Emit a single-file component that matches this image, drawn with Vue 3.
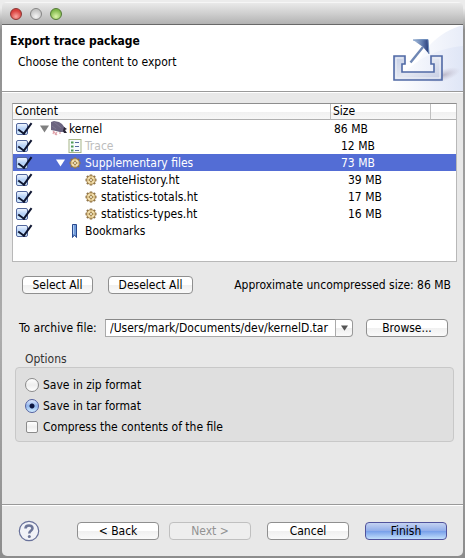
<script setup>
import { ref } from 'vue'

const rows = ref([
  { id: 'kernel', label: 'kernel', size: '86 MB', level: 0, icon: 'kernel', open: true, checked: true },
  { id: 'trace', label: 'Trace', size: '12 MB', level: 1, icon: 'trace', muted: true, checked: true },
  { id: 'supp', label: 'Supplementary files', size: '73 MB', level: 1, icon: 'gear', open: true, selected: true, checked: true },
  { id: 'history', label: 'stateHistory.ht', size: '39 MB', level: 2, icon: 'gear', checked: true },
  { id: 'totals', label: 'statistics-totals.ht', size: '17 MB', level: 2, icon: 'gear', checked: true },
  { id: 'types', label: 'statistics-types.ht', size: '16 MB', level: 2, icon: 'gear', checked: true },
  { id: 'bookmarks', label: 'Bookmarks', size: '', level: 1, icon: 'bookmark', checked: true }
])
const archive = ref('/Users/mark/Documents/dev/kernelD.tar')
const format = ref('tar')
const compress = ref(false)
const setAll = (value) => rows.value.forEach((row) => { row.checked = value })
</script>

<template>
  <div class="desktop">
    <main class="window">
      <div class="titlebar">
        <button class="light red" aria-label="Close"></button>
        <button class="light grey" aria-label="Minimize"></button>
        <button class="light green" aria-label="Zoom"></button>
      </div>

      <header class="banner">
        <div class="heading">
          <h1>Export trace package</h1>
          <p>Choose the content to export</p>
        </div>
        <svg class="art" viewBox="0 0 75 66" aria-hidden="true">
          <defs>
            <linearGradient id="wash" x1="0" y1="0" x2="1" y2="0">
              <stop offset="0" stop-color="#fff" />
              <stop offset="1" stop-color="#dce3f5" />
            </linearGradient>
            <linearGradient id="tray" x1="0" y1="0" x2="1" y2="1">
              <stop offset="0" stop-color="#c3cde5" />
              <stop offset=".5" stop-color="#e3e7f1" />
              <stop offset="1" stop-color="#c2cae2" />
            </linearGradient>
            <linearGradient id="head" x1="0" y1="0" x2="1" y2="0">
              <stop offset="0" stop-color="#b5cbe5" />
              <stop offset=".6" stop-color="#5c77ab" />
              <stop offset="1" stop-color="#263a78" />
            </linearGradient>
            <radialGradient id="shade">
              <stop offset="0" stop-color="#b7b3c4" stop-opacity=".9" />
              <stop offset="1" stop-color="#c8c5d5" stop-opacity="0" />
            </radialGradient>
          </defs>
          <path d="M75 0C50 7 30 25 18 66H75Z" fill="url(#wash)" opacity=".65" />
          <path d="M75 21C50 23 22 34 2 66H75Z" fill="url(#wash)" opacity=".75" />
          <ellipse cx="56" cy="50" rx="17" ry="6" fill="url(#shade)" transform="rotate(-18 56 50)" />
          <path d="M6 31H17V39H14V47H46V39H43V31H54V55H6Z" fill="url(#tray)" stroke="#5069a5" stroke-width="1.6" />
          <path d="M8 33H15M8 33V53H52V33H45" fill="none" stroke="#eef1f8" />
          <path d="M22.500 37.500L35 22" stroke="#6f87b4" stroke-width="2.400" />
          <path d="M25 15L40 14L41 29L35 22Z" fill="url(#head)" />
          <path d="M25 15L40 14.500L41 29" fill="none" stroke="#6f8fbd" />
        </svg>
      </header>

      <section class="body">
        <div class="tree">
          <table>
            <colgroup><col><col class="size-col"><col class="end-col"></colgroup>
            <thead>
              <tr><th>Content</th><th>Size</th><th class="last"></th></tr>
            </thead>
            <tbody>
              <tr v-for="row in rows" :key="row.id" :class="{ selected: row.selected, muted: row.muted }">
                <td>
                  <div class="node">
                    <input :id="row.id" v-model="row.checked" class="tick" type="checkbox">
                    <span class="twist" :class="'level' + row.level">
                      <svg v-if="row.open" viewBox="0 0 10 8" aria-hidden="true"><path d="M0 0H10L5 8Z" fill="currentColor" /></svg>
                    </span>
                    <svg v-if="row.icon === 'kernel'" class="icon" viewBox="0 0 16 16" aria-hidden="true">
                      <path d="M3 10L2 13M6 11L4 14M9 11V13M2 10L6 14" stroke="#e0a3ab" stroke-width="1.200" />
                      <path d="M0 1L3 0L8 1L11 3L14 7L13 11L9 11L5 10L0 9Z" fill="#6b6480" />
                      <path d="M3 1L10 7M1 5L5 8" stroke="#7d758f" />
                      <path d="M13 6L16 8L14 9L16 12L13 12L12 10Z" fill="#282334" />
                    </svg>
                    <svg v-else-if="row.icon === 'trace'" class="icon" viewBox="0 0 16 16" aria-hidden="true">
                      <rect x="2" y="1.500" width="12" height="13" fill="#f8fcff" stroke="#a8b587" />
                      <path d="M8 4.500H12M8 8.500H12M8 12.500H12" stroke="#586ca0" />
                      <path d="M4 4.500H6.500M4 8.500H6.500M4 12.500H6.500" stroke="#4f9b56" stroke-width="2.200" />
                    </svg>
                    <svg v-else-if="row.icon === 'gear'" class="icon" viewBox="0 0 16 16" aria-hidden="true">
                      <path d="M8 2.500V13.500M2.500 8H13.500M4 4L12 12M12 4L4 12" stroke="#8d7348" stroke-width="2.400" />
                      <circle cx="8" cy="8" r="4.300" fill="#f6e3b0" stroke="#a5854f" />
                      <path d="M8 4.500V11.500M4.500 8H11.500" stroke="#c3a468" />
                      <circle cx="8" cy="8" r="1.500" fill="#fffbe9" stroke="#9b7d47" />
                    </svg>
                    <svg v-else class="icon" viewBox="0 0 16 16" aria-hidden="true">
                      <path d="M5.500 1.500H9.500V14.500L7.500 12L5.500 14.500Z" fill="#729cda" stroke="#28498f" />
                      <path d="M6.500 2V11" stroke="#b2cef3" />
                    </svg>
                    <label :for="row.id">{{ row.label }}</label>
                  </div>
                </td>
                <td :class="'indent' + row.level">{{ row.size }}</td>
                <td></td>
              </tr>
            </tbody>
          </table>
        </div>

        <div class="selection">
          <button class="push" @click="setAll(true)">Select All</button>
          <button class="push wide" @click="setAll(false)">Deselect All</button>
          <output>Approximate uncompressed size: 86 MB</output>
        </div>

        <div class="archive">
          <label for="archive">To archive file:</label>
          <div class="combo">
            <input id="archive" v-model="archive" type="text">
            <button aria-label="Show recent archive files">
              <svg viewBox="0 0 8 6" aria-hidden="true"><path d="M0 0H8L4 6Z" fill="#555" /></svg>
            </button>
          </div>
          <button class="push browse">Browse...</button>
        </div>

        <fieldset class="options">
          <legend>Options</legend>
          <div class="group">
            <label><input v-model="format" type="radio" name="format" value="zip">Save in zip format</label>
            <label><input v-model="format" type="radio" name="format" value="tar">Save in tar format</label>
            <label><input v-model="compress" class="box" type="checkbox">Compress the contents of the file</label>
          </div>
        </fieldset>
      </section>

      <footer class="footer">
        <button class="help" aria-label="Help">
          <svg viewBox="0 0 22 22" aria-hidden="true">
            <circle cx="11" cy="11" r="9.700" fill="#f1f2f7" stroke="#69729b" stroke-width="1.200" />
            <path d="M7.500 8.500C7.500 4.500 14.500 4.500 14.500 8.300C14.500 11 11.300 10.600 11.300 13.500" fill="none" stroke="#6c7598" stroke-width="2.600" />
            <circle cx="11.300" cy="16.500" r="1.500" fill="#6c7598" />
          </svg>
        </button>
        <div class="steps">
          <button class="push">&lt; Back</button>
          <button class="push" disabled>Next &gt;</button>
        </div>
        <div class="actions">
          <button class="push">Cancel</button>
          <button class="push primary">Finish</button>
        </div>
      </footer>
    </main>
  </div>
</template>

<style>
body { background: #a3a3a3; }
</style>

<style scoped>
.desktop {
  min-height: 100vh;
  box-sizing: border-box;
  padding: 2px;
  display: flex;
  background: linear-gradient(#ececec 0 8px, #8f8f8f 30px, #adadad 60%, #8c8c8c);
  font: 12px/16px "DejaVu Sans Condensed", "Noto Sans", sans-serif;
  color: #000;
}
.desktop * { box-sizing: border-box; }
button, input { font: inherit; color: inherit; margin: 0; }
.window {
  flex: 1;
  min-width: 0;
  display: flex;
  flex-direction: column;
  background: #e8e8e8;
  border-radius: 5px;
  overflow: hidden;
}
.titlebar {
  height: 23px;
  display: flex;
  align-items: center;
  gap: 8px;
  padding: 0 8px;
  background: linear-gradient(#e9e9e9, #d2d2d2 45%, #b2b2b2);
  border-top: 1px solid #f6f6f6;
  border-bottom: 1px solid #686868;
}
.light {
  width: 12px;
  height: 12px;
  padding: 0;
  border: 1px solid #777;
  border-radius: 50%;
}
.red { background: radial-gradient(circle at 50% 75%, #f9a6a0, #d9403c 65%); border-color: #8b3532; }
.grey { background: radial-gradient(circle at 50% 75%, #f4f4f4, #c5c5c5 70%); border-color: #858585; }
.green { background: radial-gradient(circle at 50% 75%, #dcf5a9, #80b84b 70%); border-color: #527934; }

.banner {
  height: 67px;
  display: flex;
  justify-content: space-between;
  background: #fff;
  border-bottom: 1px solid #999;
}
.heading { padding: 8px; }
h1 { margin: 0; font-size: 12px; line-height: 16px; font-weight: 700; }
p { margin: 5px 8px; }
.art { width: 75px; height: 66px; flex: none; }

.body {
  flex: 1;
  padding: 10px 6px 0 10px;
  border-top: 1px solid #fff;
}
.tree {
  height: 159px;
  background: #fff;
  border: 1px solid #b8b8b8;
  border-top-color: #8e8e8e;
}
table { width: 100%; table-layout: fixed; border-collapse: separate; border-spacing: 0; }
.size-col { width: 100px; }
.end-col { width: 26px; }
th {
  height: 16px;
  padding: 0 2px;
  text-align: left;
  font-weight: 400;
  line-height: 15px;
  background: linear-gradient(#fff 50%, #f0f0f0 50%, #f7f7f7);
  border-bottom: 1px solid #b0b0b0;
}
th + th { border-left: 1px solid #c0c0c0; }
td { height: 17px; padding: 0; line-height: 16px; white-space: nowrap; }
.node { display: flex; align-items: center; height: 17px; padding-left: 3px; }
.tick {
  appearance: none;
  width: 12px;
  height: 12px;
  flex: none;
  position: relative;
  border: 1px solid #53679d;
  border-radius: 2px;
  background: linear-gradient(#eef5ff, #b4d0f7 50%, #d5edff);
}
.tick:checked::after {
  content: "";
  position: absolute;
  left: 4px;
  top: -4px;
  width: 6px;
  height: 12px;
  border: solid #0e1530;
  border-width: 0 2px 2px 0;
  transform: rotate(36deg);
}
.twist { display: flex; justify-content: flex-end; padding-right: 2px; color: #808080; }
.twist svg { width: 9px; height: 8px; }
.level0 { width: 23px; }
.level1 { width: 39px; }
.level2 { width: 55px; }
.icon { width: 16px; height: 16px; flex: none; margin-right: 2px; }
.indent0 { padding-left: 4px; }
.indent1 { padding-left: 11px; }
.indent2 { padding-left: 18px; }
.muted label { color: #bdbdbd; }
.selected td { background: #536dd5; color: #fff; }
.selected .twist { color: #fff; }

.push {
  width: 82px;
  height: 18px;
  padding: 0;
  line-height: 16px;
  border: 1px solid #8f8f8f;
  border-radius: 4px;
  background: linear-gradient(#fff 50%, #f0f0f0 50%, #fafafa);
}
.push:disabled { color: #929292; border-color: #c0c0c0; background: #eee; }
.primary {
  border-color: #51539c;
  background: linear-gradient(#c4d2f1, #92aeea 48%, #78a0ea 52%, #c1defb);
}
.selection {
  display: flex;
  align-items: center;
  gap: 15px;
  margin: 14px 6px 0 10px;
}
.selection .push { width: 71px; }
.selection .wide { width: 85px; }
.selection output { margin-left: auto; white-space: nowrap; }
.archive {
  display: flex;
  align-items: center;
  margin: 25px 9px 0 7px;
}
.archive > label { flex: none; width: 86px; }
.combo { flex: 1; min-width: 0; display: flex; height: 18px; }
.combo input {
  flex: 1;
  min-width: 0;
  padding: 0 0 0 4px;
  background: #fff;
  border: 1px solid #aaa;
  border-top-color: #888;
  outline: 0;
}
.combo button {
  width: 17px;
  padding: 0;
  display: grid;
  place-items: center;
  border: 1px solid #999;
  border-left: 0;
  border-radius: 0 4px 4px 0;
  background: linear-gradient(#fff 50%, #eee 50%, #fafafa);
}
.combo svg { width: 7px; height: 6px; }
.browse { margin-left: 13px; }

.options { margin: 15px 3px 0; padding: 0; border: 0; min-width: 0; }
legend { padding: 0 10px; line-height: 15px; color: #333; }
.group {
  display: flex;
  flex-direction: column;
  gap: 5px;
  padding: 9px 9px 6px;
  background: #dfdfdf;
  border: 1px solid #c8c8c8;
  border-radius: 4px;
}
.group label { display: flex; align-items: center; gap: 4px; }
.group input {
  appearance: none;
  width: 14px;
  height: 14px;
  border: 1px solid #8b8b8b;
  border-radius: 50%;
  background: linear-gradient(#fff, #eee 50%, #fff);
}
.group input[type="radio"]:checked {
  border-color: #5260a0;
  background: radial-gradient(circle, #0c1640 0 2px, transparent 3px), linear-gradient(#dfe9fc, #91b6ee 50%, #d1edff);
}
.group .box { width: 12px; height: 12px; margin: 1px; border-radius: 2px; }

.footer {
  display: flex;
  justify-content: space-between;
  align-items: center;
  height: 52px;
  padding: 0 16px;
  border-top: 1px solid #999;
  box-shadow: inset 0 1px #fff;
}
.help { width: 22px; height: 22px; padding: 0; border: 0; background: none; }
.help svg { display: block; width: 22px; height: 22px; }
.steps { display: flex; gap: 10px; margin: 0 auto 0 37px; }
.actions { display: flex; gap: 16px; }
</style>
